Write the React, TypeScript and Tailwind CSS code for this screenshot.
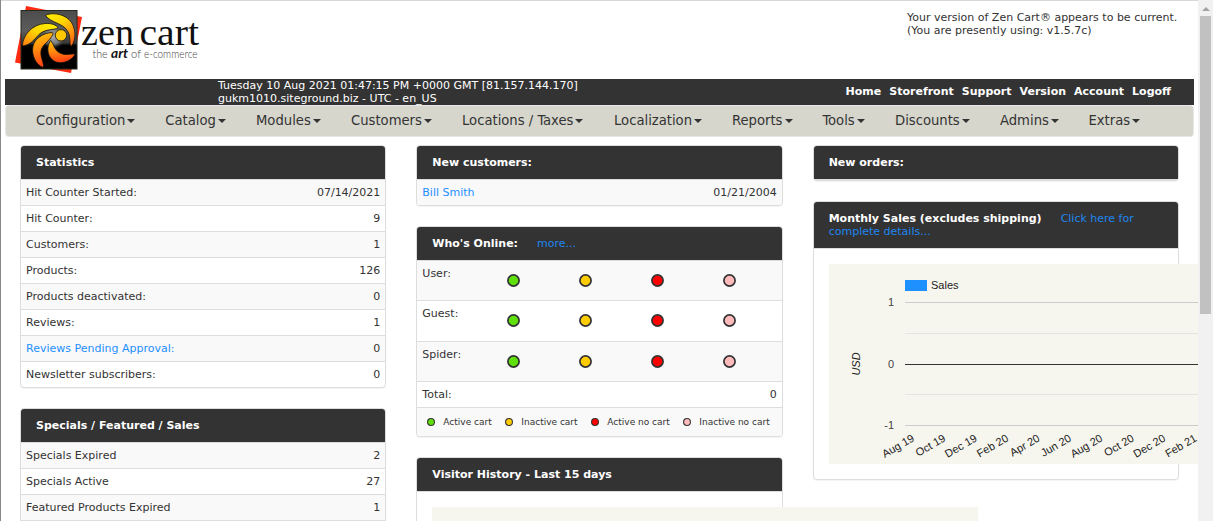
import React from "react";

type Stat = { label: string; value: string; link?: boolean };

const NAV: { label: string; width: string }[] = [
  { label: "Configuration", width: "w-[129.3px]" },
  { label: "Catalog", width: "w-[90.7px]" },
  { label: "Modules", width: "w-[95px]" },
  { label: "Customers", width: "w-[111px]" },
  { label: "Locations / Taxes", width: "w-[152px]" },
  { label: "Localization", width: "w-[118px]" },
  { label: "Reports", width: "w-[90.5px]" },
  { label: "Tools", width: "w-[72.5px]" },
  { label: "Discounts", width: "w-[105px]" },
  { label: "Admins", width: "w-[88.5px]" },
  { label: "Extras", width: "w-[80px]" },
];

const STATS: Stat[] = [
  { label: "Hit Counter Started:", value: "07/14/2021" },
  { label: "Hit Counter:", value: "9" },
  { label: "Customers:", value: "1" },
  { label: "Products:", value: "126" },
  { label: "Products deactivated:", value: "0" },
  { label: "Reviews:", value: "1" },
  { label: "Reviews Pending Approval:", value: "0", link: true },
  { label: "Newsletter subscribers:", value: "0" },
];

const SPECIALS: Stat[] = [
  { label: "Specials Expired", value: "2" },
  { label: "Specials Active", value: "27" },
  { label: "Featured Products Expired", value: "1" },
  { label: "", value: "" },
];

const COLORS = ["#5fe00a", "#ffcc00", "#ff0000", "#ffbbbb"];
const LEGEND = ["Active cart", "Inactive cart", "Active no cart", "Inactive no cart"];
const LEGEND_WIDTHS = ["w-[78px]", "w-[86px]", "w-[92px]", "w-[90px]"];
const MONTHS = ["Aug 19", "Oct 19", "Dec 19", "Feb 20", "Apr 20", "Jun 20", "Aug 20", "Oct 20", "Dec 20", "Feb 21"];

function Logo() {
  return (
    <svg width="202" height="76" viewBox="0 0 202 76" className="block">
      <defs>
        <linearGradient id="bg" x1="0" y1="0" x2="0" y2="1">
          <stop offset="0" stopColor="#4c4c4c" />
          <stop offset="0.35" stopColor="#5c5c5c" />
          <stop offset="0.55" stopColor="#3a3a3a" />
          <stop offset="0.6" stopColor="#000" />
          <stop offset="1" stopColor="#000" />
        </linearGradient>
        <radialGradient id="glow">
          <stop offset="0" stopColor="#aaa" />
          <stop offset="0.6" stopColor="#888" stopOpacity="0.8" />
          <stop offset="1" stopColor="#555" stopOpacity="0" />
        </radialGradient>
        <linearGradient id="petalTop" x1="0" y1="0" x2="0.7" y2="1">
          <stop offset="0" stopColor="#fff200" />
          <stop offset="0.45" stopColor="#ffd400" />
          <stop offset="1" stopColor="#ff6a13" />
        </linearGradient>
        <linearGradient id="petalLeft" x1="1" y1="0" x2="0" y2="1">
          <stop offset="0" stopColor="#fff200" />
          <stop offset="0.5" stopColor="#ffd400" />
          <stop offset="1" stopColor="#ff7a13" />
        </linearGradient>
        <linearGradient id="petalLow" x1="0.3" y1="0" x2="0.5" y2="1">
          <stop offset="0" stopColor="#ffc400" />
          <stop offset="0.45" stopColor="#ff8a10" />
          <stop offset="1" stopColor="#ff3a12" />
        </linearGradient>
      </defs>
      <path d="M26 6 L82 17 L71 73 L15 62.500 Z" fill="#ff2a10" />
      <rect x="21" y="10.500" width="56" height="58.500" fill="url(#bg)" stroke="#222b1c" />
      <circle cx="53" cy="37" r="12" fill="url(#glow)" />
      <g stroke="#15130c" strokeWidth="0.8">
        <path d="M45.500 15.500 C50 12.500 62 13 69 19.500 C76 26 77 40 71 46.500 C69 43 71 36 67.500 31 C63 23 51 23 45.500 15.500 Z" fill="url(#petalTop)" />
        <path d="M22.300 46 C23 35 32 24.500 45 23.500 C51 23 57 25 58 28 C55 30 45 28.500 39 34.500 C34 39.500 31 45 22.300 46 Z" fill="url(#petalLeft)" />
        <path d="M52 32.500 C43 33 35 38.500 33 46 C31 55 36 65 43 67.500 C45 64 40 58 41 51 C42 45 48 42 51 37.500 C52.500 35.500 54 33 52 32.500 Z" fill="url(#petalLow)" />
        <path d="M50.500 40.500 C46.500 47 47 55 52.500 60 C60 66 72 61 75 54 C70 53.500 66 56 60 53 C54 50 54 44 50.500 40.500 Z" fill="url(#petalLow)" />
        <circle cx="61" cy="35.300" r="5.700" fill="#ffc800" />
      </g>
      <g fill="#111" fontSize="38.500" className="font-['Liberation_Serif',serif]">
        <text x="81" y="45" textLength="53" lengthAdjust="spacingAndGlyphs">zen</text>
        <text x="139.500" y="45" textLength="59.500" lengthAdjust="spacingAndGlyphs">cart</text>
      </g>
      <g fill="#444" fontSize="12.500" className="font-['Lato',sans-serif]">
        <text x="92.500" y="57.500" textLength="15" lengthAdjust="spacingAndGlyphs" fontWeight="300">the</text>
        <text x="111" y="57.500" textLength="17" lengthAdjust="spacingAndGlyphs" fontWeight="700" fontStyle="italic" fill="#111">art</text>
        <text x="131" y="57.500" textLength="10" lengthAdjust="spacingAndGlyphs" fontWeight="300">of</text>
        <text x="144" y="57.500" textLength="53.500" lengthAdjust="spacingAndGlyphs" fontWeight="300">e-commerce</text>
      </g>
    </svg>
  );
}

function Panel({ title, link, children }: { title: string; link?: string; children?: React.ReactNode }) {
  return (
    <section className="mb-5 rounded-[4px] border border-[#ddd] bg-white shadow-[0_1px_1px_rgba(0,0,0,0.05)]">
      <h2 className="rounded-t-[3px] border-b border-[#ddd] bg-[#333] px-[15px] py-[10px] text-[11px] leading-[13px] font-bold text-white">
        {title}
        {link && <a className="ml-[19px] font-normal text-[#1e86f0]">{link}</a>}
      </h2>
      {children}
    </section>
  );
}

function StatRows({ rows }: { rows: Stat[] }) {
  return (
    <div>
      {rows.map((row) => (
        <div key={row.label} className="flex justify-between border-t border-[#ddd] px-[5px] py-[6px] leading-[13px] first:border-t-0 last:rounded-b-[3px] odd:bg-[#f9f9f9]">
          <span className={row.link ? "text-[#1e90ff]" : ""}>{row.label}</span>
          <span>{row.value}</span>
        </div>
      ))}
    </div>
  );
}

function Dot({ color, size }: { color: string; size: number }) {
  return (
    <svg width={size} height={size} viewBox="0 0 13 13" className="block shrink-0">
      <circle cx="6.500" cy="6.500" r="5.600" fill={color} stroke="#333" strokeWidth="1.700" />
    </svg>
  );
}

function OnlineRow({ label, className }: { label: string; className: string }) {
  return (
    <div className={`flex px-[5px] ${className}`}>
      <span className="w-[84.5px] pt-[6px] leading-[13px]">{label}</span>
      <div className="flex gap-[59px] pt-[13px]">
        {COLORS.map((c) => <Dot key={c} color={c} size={13} />)}
      </div>
    </div>
  );
}

function SalesChart() {
  return (
    <svg width="370" height="200" viewBox="829 264 370 200" className="block font-['Liberation_Sans',Arial,sans-serif] text-[11px]">
      <rect x="829" y="264" width="370" height="200" fill="#f7f6ee" />
      <rect x="905" y="280" width="22" height="11" fill="#1e90ff" />
      <text x="931" y="289" fill="#222">Sales</text>
      <g shapeRendering="crispEdges">
        <rect x="905" y="302" width="294" height="1" fill="#ccc" />
        <rect x="905" y="333" width="294" height="1" fill="#e5e5e0" />
        <rect x="905" y="364" width="294" height="1" fill="#333" />
        <rect x="905" y="394" width="294" height="1" fill="#e5e5e0" />
        <rect x="905" y="425" width="294" height="1" fill="#ccc" />
      </g>
      <g fill="#444" textAnchor="end">
        <text x="894" y="306">1</text>
        <text x="894" y="368">0</text>
        <text x="894" y="429">-1</text>
      </g>
      <text transform="translate(860 364) rotate(-90)" textAnchor="middle" fontStyle="italic" fill="#222">USD</text>
      <g fill="#222" textAnchor="end">
        {MONTHS.map((m, i) => (
          <text key={m} transform={`translate(${915 + i * 31.4} 440.500) rotate(-30)`}>{m}</text>
        ))}
      </g>
    </svg>
  );
}

export default function App() {
  return (
    <div className="flex h-[521px] w-[1213px] overflow-hidden border-l border-[#888] bg-white font-['DejaVu_Sans',sans-serif] text-[11px] leading-[13px] text-[#333]">
      <div className="w-[1197px] shrink-0 overflow-hidden border-t border-[#d8d8dc] pr-1 pl-1">
        <header className="flex h-[78px] justify-between">
          <div className="-mt-px -ml-[5px]"><Logo /></div>
          <p className="w-[287px] pt-[10px]">Your version of Zen Cart® appears to be current.<br />(You are presently using: v1.5.7c)</p>
        </header>
        <div className="flex h-[26px] items-center justify-between bg-[#333] pr-[23px] pl-[213px] text-white">
          <p>Tuesday 10 Aug 2021 01:47:15 PM +0000 GMT [81.157.144.170]<br />gukm1010.siteground.biz - UTC - en_US</p>
          <nav className="flex gap-2 pb-[2px] font-bold">
            {["Home", "Storefront", "Support", "Version", "Account", "Logoff"].map((t) => <a key={t}>{t}</a>)}
          </nav>
        </div>
        <nav className="flex h-8 items-center rounded-[4px] border border-[#e7e7e7] bg-[#d6d6cc] pb-[4px] pl-[30px] font-['DejaVu_Sans_Condensed','DejaVu_Sans',sans-serif] text-[14.67px]">
          {NAV.map((n) => (
            <a key={n.label} className={`flex shrink-0 items-center whitespace-nowrap ${n.width}`}>
              {n.label}
              <span className="mt-[3px] ml-[2px] border-x-4 border-t-4 border-x-transparent border-t-[#333]" />
            </a>
          ))}
        </nav>
        <main className="flex gap-[30px] pt-2 pl-[15px]">
          <div className="w-[366.33px] shrink-0">
            <Panel title="Statistics"><StatRows rows={STATS} /></Panel>
            <Panel title="Specials / Featured / Sales"><StatRows rows={SPECIALS} /></Panel>
          </div>
          <div className="w-[366.33px] shrink-0">
            <Panel title="New customers:"><StatRows rows={[{ label: "Bill Smith", value: "01/21/2004", link: true }]} /></Panel>
            <Panel title="Who's Online:" link="more...">
              <OnlineRow label="User:" className="h-[39px] bg-[#f9f9f9]" />
              <OnlineRow label="Guest:" className="h-[41px] border-t border-[#ddd]" />
              <OnlineRow label="Spider:" className="h-[40px] border-t border-[#ddd] bg-[#f9f9f9]" />
              <div className="flex h-[26px] items-center justify-between border-t border-[#ddd] px-[5px]"><span>Total:</span><span>0</span></div>
              <div className="flex h-[29px] items-center rounded-b-[3px] border-t border-[#ddd] bg-[#f9f9f9] pl-[10px] text-[9px]">
                {LEGEND.map((t, i) => (
                  <div key={t} className={`flex shrink-0 items-center gap-2 whitespace-nowrap ${LEGEND_WIDTHS[i]}`}><Dot color={COLORS[i]} size={8} />{t}</div>
                ))}
              </div>
            </Panel>
            <Panel title="Visitor History - Last 15 days">
              <div className="h-[200px] p-[15px]"><div className="h-[180px] w-[546px] bg-[#f7f6ee]" /></div>
            </Panel>
          </div>
          <div className="w-[366.33px] shrink-0">
            <Panel title="New orders:" />
            <Panel title="Monthly Sales (excludes shipping)" link="Click here for complete details...">
              <div className="p-[15px]"><SalesChart /></div>
            </Panel>
          </div>
        </main>
      </div>
      <aside className="flex w-[15px] shrink-0 flex-col items-center bg-[#f1f1f1] pt-[7px]">
        <span className="mb-[5px] border-x-4 border-b-4 border-x-transparent border-b-[#a3a3a3]" />
        <div className="h-[298px] w-[11px] bg-[#c1c1c1]" />
      </aside>
    </div>
  );
}
